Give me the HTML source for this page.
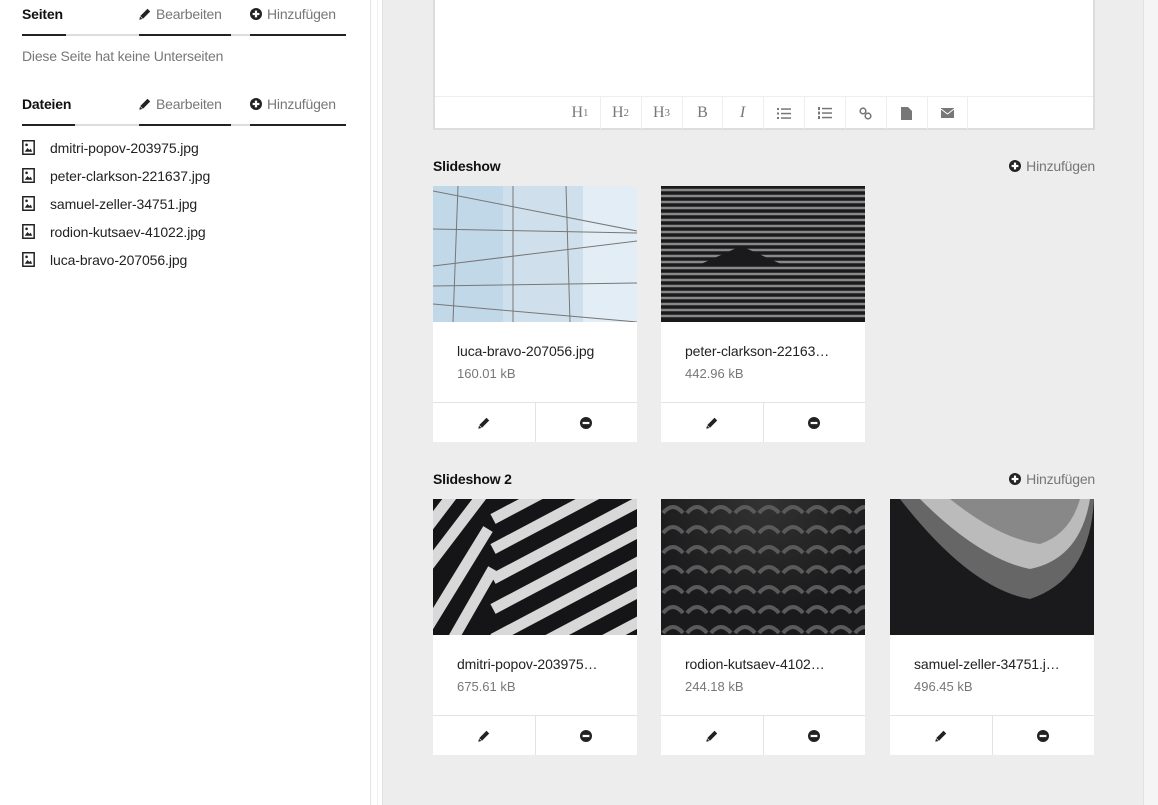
<!DOCTYPE html>
<html><head><meta charset="utf-8"><style>
*{margin:0;padding:0;box-sizing:border-box}
body{width:1158px;height:805px;overflow:hidden;background:#fff;font-family:"Liberation Sans",sans-serif;position:relative;color:#222}
.abs{position:absolute}
.side{left:0;top:0;width:370px;height:805px;background:#fff}
.h{font-size:14px;font-weight:bold;color:#111;letter-spacing:-0.2px}
.lnk{font-size:14px;color:#777;letter-spacing:-0.2px;white-space:nowrap}
.lnk svg{vertical-align:-1px;margin-right:5px}
.ul{height:2px;background:#222}
.ulg{height:2px;background:#ddd}
.file{left:22px;font-size:14px;color:#222;letter-spacing:-0.1px}
.file svg{vertical-align:-2px;margin-right:15px}
.main{left:383px;top:0;width:760px;height:805px;background:#ededed}
.card{position:absolute;width:204px;background:#fff}
.card .img{height:136px;overflow:hidden}
.card .nm{position:absolute;left:24px;top:157px;font-size:14px;color:#222;white-space:nowrap;letter-spacing:-0.1px}
.card .sz{position:absolute;left:24px;top:180px;font-size:13px;color:#777}
.card .act{position:absolute;top:216px;left:0;width:204px;height:40px;border-top:1px solid #e3e3e3;display:flex}
.card .act div{flex:1;display:flex;align-items:center;justify-content:center}
.card .act div+div{border-left:1px solid #e3e3e3}
.tb{position:absolute;top:97px;height:32px;width:40px;border-left:1px solid #eee;display:flex;align-items:center;justify-content:center;font-family:"Liberation Serif",serif;font-size:16px;color:#777}
.r{right:63px;text-align:right}
</style></head><body>
<svg width="0" height="0" style="position:absolute"><defs>
<symbol id="pen" viewBox="0 0 12 12"><path d="M8.5 0.8L11.2 3.5L4 10.7L1.3 8Z" fill="#222"/><path d="M1 8.6L3.4 11L0.3 11.7Z" fill="#222"/></symbol>
<symbol id="minus" viewBox="0 0 12 12"><circle cx="6" cy="6" r="6" fill="#222"/><rect x="2.6" y="4.9" width="6.8" height="2.2" fill="#fff"/></symbol>
<symbol id="plus" viewBox="0 0 12 12"><circle cx="6" cy="6" r="6" fill="#222"/><rect x="2.6" y="4.9" width="6.8" height="2.2" fill="#fff"/><rect x="4.9" y="2.6" width="2.2" height="6.8" fill="#fff"/></symbol>
<symbol id="fimg" viewBox="0 0 12 14"><rect x="0.7" y="0.7" width="10.6" height="12.6" fill="#fff" stroke="#222" stroke-width="1.4"/><path d="M2.5 11L5 7.5L6.8 9.3L8 8L9.5 11Z" fill="#222"/><circle cx="4.2" cy="4.5" r="1.2" fill="#222"/></symbol>
</defs></svg>
<div class="abs side"></div>
<div class="abs" style="left:370px;top:0;width:1px;height:805px;background:#e4e4e4"></div>
<div class="abs" style="left:377px;top:0;width:1px;height:805px;background:#f0f0f0"></div>
<div class="abs" style="left:382px;top:0;width:1px;height:805px;background:#e0e0e0"></div>

<div class="abs h" style="left:22px;top:6px">Seiten</div>
<div class="abs lnk" style="left:139px;top:6px"><svg width="12" height="12"><use href="#pen"/></svg>Bearbeiten</div>
<div class="abs lnk" style="left:250px;top:6px"><svg width="12" height="12"><use href="#plus"/></svg>Hinzufügen</div>
<div class="abs ulg" style="left:22px;top:34px;width:324px"></div>
<div class="abs ul" style="left:22px;top:34px;width:44px"></div>
<div class="abs ul" style="left:139px;top:34px;width:92px"></div>
<div class="abs ul" style="left:250px;top:34px;width:96px"></div>
<div class="abs lnk" style="left:22px;top:48px">Diese Seite hat keine Unterseiten</div>

<div class="abs h" style="left:22px;top:96px">Dateien</div>
<div class="abs lnk" style="left:139px;top:96px"><svg width="12" height="12"><use href="#pen"/></svg>Bearbeiten</div>
<div class="abs lnk" style="left:250px;top:96px"><svg width="12" height="12"><use href="#plus"/></svg>Hinzufügen</div>
<div class="abs ulg" style="left:22px;top:124px;width:324px"></div>
<div class="abs ul" style="left:22px;top:124px;width:53px"></div>
<div class="abs ul" style="left:139px;top:124px;width:92px"></div>
<div class="abs ul" style="left:250px;top:124px;width:96px"></div>

<div class="abs file" style="top:140px"><svg width="13" height="15"><use href="#fimg"/></svg>dmitri-popov-203975.jpg</div>
<div class="abs file" style="top:168px"><svg width="13" height="15"><use href="#fimg"/></svg>peter-clarkson-221637.jpg</div>
<div class="abs file" style="top:196px"><svg width="13" height="15"><use href="#fimg"/></svg>samuel-zeller-34751.jpg</div>
<div class="abs file" style="top:224px"><svg width="13" height="15"><use href="#fimg"/></svg>rodion-kutsaev-41022.jpg</div>
<div class="abs file" style="top:252px"><svg width="13" height="15"><use href="#fimg"/></svg>luca-bravo-207056.jpg</div>

<div class="abs main"></div>
<div class="abs" style="left:1143px;top:0;width:15px;height:805px;background:#f5f5f5;border-left:1px solid #e2e2e2"></div>

<div class="abs" style="left:433px;top:-2px;width:662px;height:132px;background:#fff;border:2px solid #ddd;border-top:none"></div>
<div class="abs" style="left:435px;top:96px;width:658px;height:1px;background:#eee"></div>
<div class="tb" style="left:560px;border-left:none">H<small style="font-size:11px">1</small></div>
<div class="tb" style="left:600px">H<small style="font-size:11px">2</small></div>
<div class="tb" style="left:641px">H<small style="font-size:11px">3</small></div>
<div class="tb" style="left:682px">B</div>
<div class="tb" style="left:722px;font-style:italic">I</div>
<div class="tb" style="left:763px"><svg width="14" height="11"><g fill="#777"><rect x="0" y="0" width="2" height="2"/><rect x="0" y="4.5" width="2" height="2"/><rect x="0" y="9" width="2" height="2"/><rect x="4" y="0.3" width="10" height="1.5"/><rect x="4" y="4.8" width="10" height="1.5"/><rect x="4" y="9.3" width="10" height="1.5"/></g></svg></div>
<div class="tb" style="left:804px"><svg width="14" height="12"><g fill="#777"><rect x="0" y="0" width="2" height="3"/><rect x="0" y="4.5" width="2" height="3"/><rect x="0" y="9" width="2" height="3"/><rect x="4" y="0.8" width="10" height="1.5"/><rect x="4" y="5.3" width="10" height="1.5"/><rect x="4" y="9.8" width="10" height="1.5"/></g></svg></div>
<div class="tb" style="left:845px"><svg width="13" height="13"><g stroke="#777" stroke-width="1.6" fill="none"><circle cx="4" cy="4" r="2.8"/><circle cx="9" cy="9" r="2.8"/></g></svg></div>
<div class="tb" style="left:886px"><svg width="11" height="13"><path d="M0 0H7L11 4V13H0Z" fill="#777"/></svg></div>
<div class="tb" style="left:927px"><svg width="13" height="10"><rect width="13" height="10" fill="#777"/><path d="M0 1L6.5 6L13 1" stroke="#fff" fill="none"/></svg></div>
<div class="abs" style="left:967px;top:97px;width:1px;height:32px;background:#eee"></div>

<div class="abs h" style="left:433px;top:158px">Slideshow</div>
<div class="abs lnk r" style="top:158px"><svg width="12" height="12"><use href="#plus"/></svg>Hinzufügen</div>

<div class="card" style="left:433px;top:186px;height:256px">
<div class="img"><svg width="204" height="136"><rect width="204" height="136" fill="#cfe0ec"/><rect x="0" y="0" width="70" height="136" fill="#c0d8e8"/><rect x="150" y="0" width="54" height="136" fill="#e2edf5"/><g stroke="#777" stroke-width="1"><line x1="0" y1="5" x2="204" y2="45"/><line x1="0" y1="43" x2="204" y2="47"/><line x1="0" y1="80" x2="204" y2="55"/><line x1="0" y1="100" x2="204" y2="97"/><line x1="0" y1="118" x2="204" y2="136"/><line x1="25" y1="0" x2="20" y2="136"/><line x1="80" y1="0" x2="80" y2="136"/><line x1="133" y1="0" x2="137" y2="136"/></g></svg></div>
<div class="nm">luca-bravo-207056.jpg</div><div class="sz">160.01 kB</div>
<div class="act"><div><svg width="12" height="12"><use href="#pen"/></svg></div><div><svg width="12" height="12"><use href="#minus"/></svg></div></div></div>

<div class="card" style="left:661px;top:186px;height:256px">
<div class="img"><svg width="205" height="136"><rect width="205" height="136" fill="#1a1a1c"/><g stroke="#888" stroke-width="2.5"><line x1="0" y1="4" x2="205" y2="4"/><line x1="0" y1="10" x2="205" y2="10"/><line x1="0" y1="16" x2="205" y2="16"/><line x1="0" y1="22" x2="205" y2="22"/><line x1="0" y1="28" x2="205" y2="28"/><line x1="0" y1="34" x2="205" y2="34"/><line x1="0" y1="40" x2="205" y2="40"/><line x1="0" y1="46" x2="205" y2="46"/><line x1="0" y1="52" x2="205" y2="52"/><line x1="0" y1="58" x2="205" y2="58"/><line x1="0" y1="64" x2="205" y2="64"/><line x1="0" y1="70" x2="205" y2="70"/><line x1="0" y1="76" x2="205" y2="76"/><line x1="0" y1="82" x2="205" y2="82"/><line x1="0" y1="88" x2="205" y2="88"/><line x1="0" y1="94" x2="205" y2="94"/><line x1="0" y1="100" x2="205" y2="100"/><line x1="0" y1="106" x2="205" y2="106"/><line x1="0" y1="112" x2="205" y2="112"/><line x1="0" y1="118" x2="205" y2="118"/><line x1="0" y1="124" x2="205" y2="124"/><line x1="0" y1="130" x2="205" y2="130"/></g><path d="M40 78L80 60L120 78Z" fill="#1a1a1c"/></svg></div>
<div class="nm">peter-clarkson-22163…</div><div class="sz">442.96 kB</div>
<div class="act"><div><svg width="12" height="12"><use href="#pen"/></svg></div><div><svg width="12" height="12"><use href="#minus"/></svg></div></div></div>

<div class="abs h" style="left:433px;top:471px">Slideshow 2</div>
<div class="abs lnk r" style="top:471px"><svg width="12" height="12"><use href="#plus"/></svg>Hinzufügen</div>

<div class="card" style="left:433px;top:499px;height:256px">
<div class="img"><svg width="204" height="136"><rect width="204" height="136" fill="#151517"/><g stroke="#d8d8d8" stroke-width="11"><line x1="60" y1="-10" x2="230" y2="-100"/><line x1="60" y1="20" x2="230" y2="-70"/><line x1="60" y1="50" x2="230" y2="-40"/><line x1="60" y1="80" x2="230" y2="-10"/><line x1="60" y1="110" x2="230" y2="20"/><line x1="60" y1="140" x2="230" y2="50"/><line x1="60" y1="170" x2="230" y2="80"/><line x1="60" y1="200" x2="230" y2="110"/><line x1="60" y1="230" x2="230" y2="140"/><line x1="50" y1="-5" x2="-30" y2="100"/><line x1="20" y1="-5" x2="-60" y2="100"/><line x1="55" y1="30" x2="-10" y2="136"/><line x1="60" y1="70" x2="20" y2="140"/></g></svg></div>
<div class="nm">dmitri-popov-203975…</div><div class="sz">675.61 kB</div>
<div class="act"><div><svg width="12" height="12"><use href="#pen"/></svg></div><div><svg width="12" height="12"><use href="#minus"/></svg></div></div></div>

<div class="card" style="left:661px;top:499px;height:256px">
<div class="img" style="background:radial-gradient(circle at 50% 0,#333 0,#1a1a1c 70%)"><svg width="205" height="136"><defs><pattern id="sc" width="24" height="20" patternUnits="userSpaceOnUse"><path d="M2 14Q12 2 22 14" stroke="#5a5a5a" stroke-width="4" fill="none"/></pattern></defs><rect width="205" height="136" fill="url(#sc)"/></svg></div>
<div class="nm">rodion-kutsaev-4102…</div><div class="sz">244.18 kB</div>
<div class="act"><div><svg width="12" height="12"><use href="#pen"/></svg></div><div><svg width="12" height="12"><use href="#minus"/></svg></div></div></div>

<div class="card" style="left:890px;top:499px;height:256px">
<div class="img"><svg width="204" height="136"><rect width="204" height="136" fill="#1a1a1c"/><path d="M10 0Q80 90 140 100Q200 80 204 0Z" fill="#666"/><path d="M30 0Q90 60 140 70Q190 60 200 0Z" fill="#bbb"/><path d="M60 0Q110 40 150 45Q180 35 190 0Z" fill="#888"/></svg></div>
<div class="nm">samuel-zeller-34751.j…</div><div class="sz">496.45 kB</div>
<div class="act"><div><svg width="12" height="12"><use href="#pen"/></svg></div><div><svg width="12" height="12"><use href="#minus"/></svg></div></div></div>
</body></html>
